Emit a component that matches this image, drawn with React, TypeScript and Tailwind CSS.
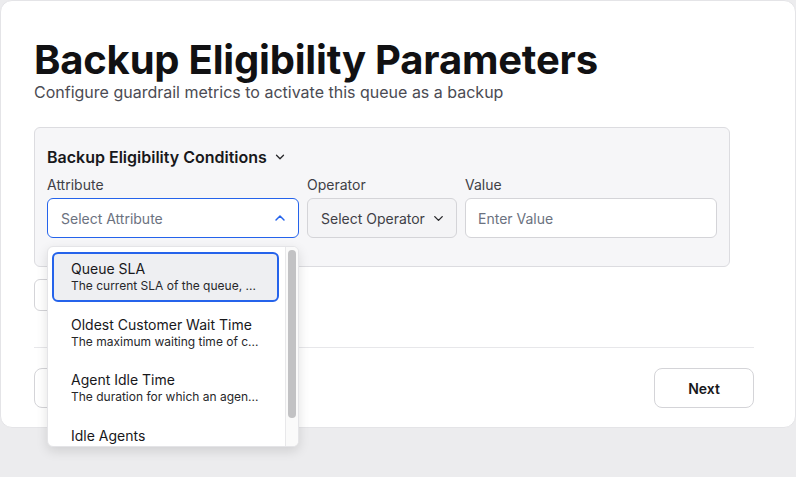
import React from "react";

const ChevronDown = ({ className = "" }: { className?: string }) => (
  <svg viewBox="0 0 24 24" fill="none" stroke="currentColor" strokeWidth={2.2} strokeLinecap="round" strokeLinejoin="round" className={className}>
    <path d="M6 9l6 6 6-6" />
  </svg>
);
const ChevronUp = ({ className = "" }: { className?: string }) => (
  <svg viewBox="0 0 24 24" fill="none" stroke="currentColor" strokeWidth={2.2} strokeLinecap="round" strokeLinejoin="round" className={className}>
    <path d="M6 15l6-6 6 6" />
  </svg>
);

const items = [
  { t: "Queue SLA", d: "The current SLA of the queue, ..." },
  { t: "Oldest Customer Wait Time", d: "The maximum waiting time of c..." },
  { t: "Agent Idle Time", d: "The duration for which an agen..." },
  { t: "Idle Agents", d: "The number of agents currently..." },
];

export default function App() {
  return (
    <div className="relative w-[796px] h-[477px] bg-[#ececee] overflow-hidden" style={{ fontFamily: "Inter, 'Noto Sans', sans-serif" }}>
      <div className="h-[428px] bg-white rounded-xl border border-[#e4e4e7] flex flex-col px-[33px] pt-[39px]">
        <h1 className="text-[40px] leading-[40px] font-bold text-[#111113] tracking-[-0.2px]">Backup Eligibility Parameters</h1>
        <p className="mt-[2px] text-[16px] leading-[20px] text-[#4b4b53]">Configure guardrail metrics to activate this queue as a backup</p>

        <div className="mt-[25px] w-[696px] bg-[#f6f6f8] border border-[#dcdce0] rounded-md px-3 pt-[17px] pb-[28px]">
          <div className="flex items-center gap-[6px] text-[16px] leading-[24px] font-semibold text-[#18181b]">
            Backup Eligibility Conditions
            <ChevronDown className="w-[14px] h-[14px] text-[#27272a]" />
          </div>
          <div className="mt-[6px] flex gap-2">
            <div className="w-[252px] flex flex-col">
              <span className="text-[14px] leading-[20px] text-[#3f3f46] mb-[3px]">Attribute</span>
              <div className="h-10 bg-white border border-[#2563eb] rounded-md flex items-center justify-between pl-[13px] pr-[10px]">
                <span className="text-[14px] text-[#6b7280]">Select Attribute</span>
                <ChevronUp className="w-[16px] h-[16px] text-[#2563eb]" />
              </div>
            </div>
            <div className="w-[150px] flex flex-col">
              <span className="text-[14px] leading-[20px] text-[#3f3f46] mb-[3px]">Operator</span>
              <div className="h-10 bg-[#f4f4f6] border border-[#d4d4d8] rounded-md flex items-center justify-between pl-[13px] pr-[10px]">
                <span className="text-[14px] text-[#3f3f46]">Select Operator</span>
                <ChevronDown className="w-[15px] h-[15px] text-[#27272a]" />
              </div>
            </div>
            <div className="flex-1 flex flex-col">
              <span className="text-[14px] leading-[20px] text-[#3f3f46] mb-[3px]">Value</span>
              <div className="h-10 bg-white border border-[#d4d4d8] rounded-md flex items-center pl-[12px]">
                <span className="text-[14px] text-[#6b7280]">Enter Value</span>
              </div>
            </div>
          </div>
        </div>

        <div className="mt-[12px] flex">
          <button aria-label="Add condition" className="block h-8 w-[150px] border border-[#d4d4d8] rounded-md bg-white" />
        </div>

        <div className="mt-[36px] w-[720px] border-t border-[#e7e7ea]" />

        <div className="mt-[20px] w-[720px] flex justify-between">
          <button aria-label="Back" className="block h-10 w-[100px] border border-[#d4d4d8] rounded-lg bg-white" />
          <button className="h-10 w-[100px] border border-[#d4d4d8] rounded-lg bg-white text-[14px] font-semibold text-[#18181b]">Next</button>
        </div>
      </div>

      <div className="absolute left-[47px] top-[246px] w-[252px] h-[201px] bg-white border border-[#e4e4e7] rounded-md shadow-[0_4px_12px_rgba(0,0,0,0.12)] overflow-hidden flex">
        <div className="flex-1 flex flex-col gap-[5.5px] pl-1 pr-[6px] pt-[5px]">
          {items.map((it, i) => (
            <div
              key={it.t}
              className={
                i === 0
                  ? "shrink-0 border-2 border-[#2563eb] bg-[#eeeff2] rounded-md py-[6px] pl-[17px]"
                  : "shrink-0 border-2 border-transparent rounded-md py-[6px] pl-[17px]"
              }
            >
              <div className="text-[14px] leading-[18px] text-[#18181b]">{it.t}</div>
              <div className="text-[12px] leading-[16px] text-[#27272a] whitespace-nowrap">{it.d}</div>
            </div>
          ))}
        </div>
        <div className="w-[13px] bg-[#fafafa] border-l border-[#e8e8ea] pt-[3px] pl-[2px]">
          <div className="w-[8px] h-[168px] rounded-full bg-[#c2c2c4]" />
        </div>
      </div>
    </div>
  );
}
